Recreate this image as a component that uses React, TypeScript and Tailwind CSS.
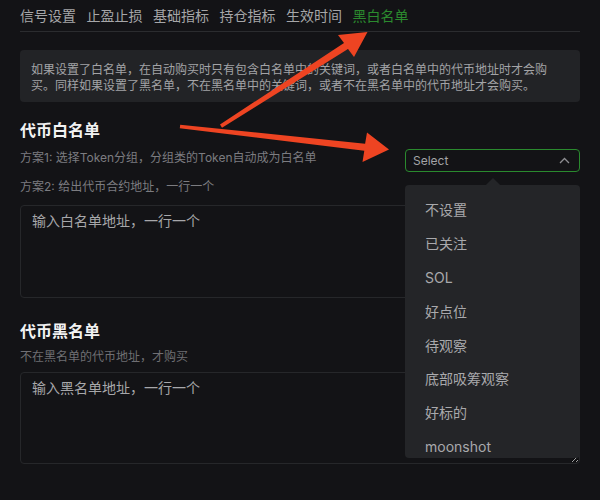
import React from "react";

const tabs = ["信号设置", "止盈止损", "基础指标", "持仓指标", "生效时间", "黑白名单"];
const options = ["不设置", "已关注", "SOL", "好点位", "待观察", "底部吸筹观察", "好标的", "moonshot"];

export default function App() {
  return (
    <div className="relative w-[600px] h-[500px] overflow-hidden bg-[#131316] font-['Inter','Noto_Sans_CJK_SC',sans-serif]">
      <div className="px-[20px]">
        <div className="flex gap-[10.5px] pt-[6px] pb-[5px] border-b border-[#2b2c2f] text-[14px] leading-[20px]">
          {tabs.map((t, i) => (
            <span key={t} className={i === tabs.length - 1 ? "text-[#2b8a2e]" : "text-[#a6a6a8]"}>
              {t}
            </span>
          ))}
        </div>

        <div className="mt-[18px] rounded-[4px] bg-[#222326] pl-[11px] pr-[16px] pt-[12px] pb-[8px] text-[12px] leading-[16px] text-[#a3a3a6]">
          如果设置了白名单，在自动购买时只有包含白名单中的关键词，或者白名单中的代币地址时才会购
          <br />
          买。同样如果设置了黑名单，不在黑名单中的关键词，或者不在黑名单中的代币地址才会购买。
        </div>

        <div className="mt-[16px] text-[16px] leading-[24px] font-bold text-[#f2f2f2]">代币白名单</div>

        <div className="mt-[7px] flex items-start justify-between">
          <div className="pt-[1px] text-[12px] leading-[16px] text-[#7c7c80]">
            方案1: 选择Token分组，分组类的Token自动成为白名单
          </div>
          <div className="flex h-[23px] w-[175px] items-center justify-between rounded-[4px] border border-[#2a8a2e] pl-[7px] pr-[9px]">
            <span className="text-[12px] text-[#a3a3a6]">Select</span>
            <svg width="11" height="7" viewBox="0 0 11 7">
              <polyline points="1,6 5.5,1.5 10,6" fill="none" stroke="#8e8e92" strokeWidth="1.3" />
            </svg>
          </div>
        </div>

        <div className="mt-[7px] text-[12px] leading-[16px] text-[#7c7c80]">方案2: 给出代币合约地址，一行一个</div>

        <textarea
          placeholder="输入白名单地址，一行一个"
          className="mt-[10px] block h-[93px] w-full rounded-[4px] border border-[#26272a] bg-[#131316] px-[11px] py-[4px] text-[14px] leading-[22px] text-[#d0d0d0] outline-none placeholder:text-[#a7a7aa] [color-scheme:dark]"
        />

        <div className="mt-[20.5px] text-[16px] leading-[24px] font-bold text-[#f2f2f2]">代币黑名单</div>
        <div className="mt-[6.5px] text-[12px] leading-[16px] text-[#6f6f73]">不在黑名单的代币地址，才购买</div>

        <textarea
          placeholder="输入黑名单地址，一行一个"
          className="mt-[7px] block h-[92px] w-full rounded-[4px] border border-[#26272a] bg-[#131316] px-[11px] py-[4px] text-[14px] leading-[22px] text-[#d0d0d0] outline-none placeholder:text-[#a7a7aa] [color-scheme:dark]"
        />
      </div>

      {/* dropdown menu */}
      <div className="absolute left-[405px] top-[185px] w-[175px]">
        <div className="absolute left-[82.5px] top-[-5px] h-[10px] w-[10px] rotate-45 bg-[#242528]" />
        <div className="relative h-[273px] overflow-hidden rounded-[4px] bg-[#242528] pt-[8px]">
          {options.map((o) => (
            <div key={o} className="flex h-[33.8px] items-center pl-[20px] text-[14px] text-[#a9a9ac]">
              {o}
            </div>
          ))}
        </div>
      </div>

      {/* annotation arrows */}
      <svg className="pointer-events-none absolute left-0 top-0" width="600" height="500" viewBox="0 0 600 500">
        <polygon
          fill="#ee4422"
          points="180.2,124.7 365.1,143.7 367,132.5 389,149.5 362.5,162 364.3,150.7 179.8,128.3"
        />
        <polygon
          fill="#ee4422"
          points="220,124.5 344,43 338,35 367.5,32 354,57 348,49 222,127.8"
        />
      </svg>
    </div>
  );
}
